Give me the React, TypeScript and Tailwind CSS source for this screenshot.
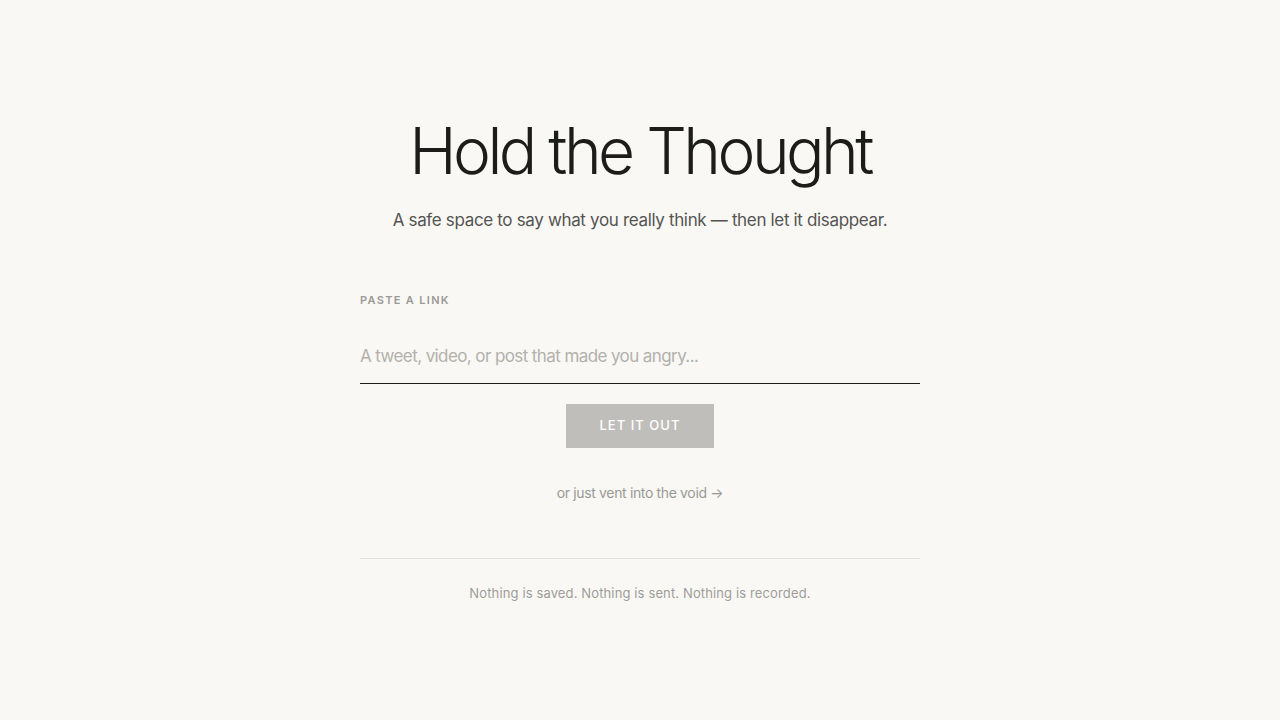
import React, { useState } from "react";

export default function App() {
  const [link, setLink] = useState("");

  return (
    <div
      className="min-h-screen bg-[#f9f8f5] text-[#1c1c1a]"
      style={{ fontFamily: "Inter, 'Noto Sans', sans-serif" }}
    >
      <div className="mx-auto flex w-[560px] flex-col items-center pt-[113px]">
        {/* Header */}
        <h1 className="text-[64px] font-light leading-[76px] tracking-[-0.055em] text-[#1c1c1a]">
          Hold the Thought
        </h1>
        <p className="mt-[19px] text-[17px] tracking-[-0.02em] text-[#555452]">
          A safe space to say what you really think — then let it disappear.
        </p>

        {/* Link form */}
        <div className="mt-[58px] w-full">
          <label className="block text-[11px] font-semibold uppercase tracking-[0.12em] text-[#9b9a96]">
            Paste a link
          </label>
          <input
            value={link}
            onChange={(e) => setLink(e.target.value)}
            placeholder="A tweet, video, or post that made you angry..."
            className="mt-[36px] w-full border-b border-[#1c1c1a] bg-transparent pb-[13px] text-[17px] tracking-[-0.035em] text-[#1c1c1a] outline-none placeholder:text-[#b3b1ac]"
          />
        </div>

        <button
          disabled={!link}
          className="mt-5 h-11 w-[148px] bg-[#bfbebb] text-[13px] font-medium uppercase tracking-[0.08em] text-white"
        >
          Let it out
        </button>

        <a href="#" className="mt-[34px] text-[14px] tracking-[-0.025em] text-[#9b9a96]">
          or just vent into the void →
        </a>

        {/* Footer */}
        <div className="mt-[55px] w-full border-t border-[#e2e1dd] pt-[25px] text-center text-[13px] tracking-[0.01em] text-[#9e9d99]">
          Nothing is saved. Nothing is sent. Nothing is recorded.
        </div>
      </div>
    </div>
  );
}
